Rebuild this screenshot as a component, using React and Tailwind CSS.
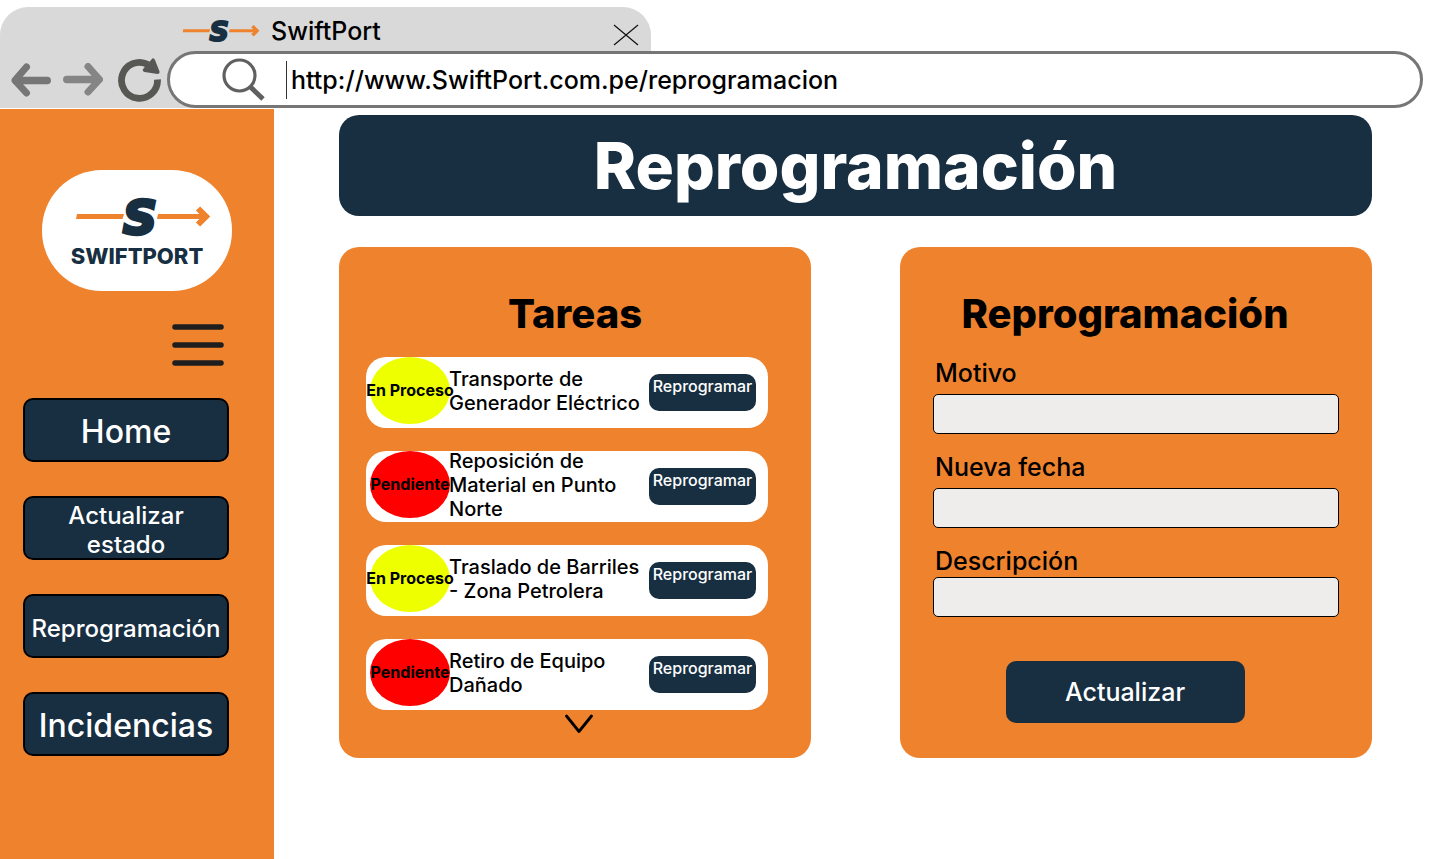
import { useId } from "react";

const NAV = [
  { label: "Home", size: "text-[32px] leading-10" },
  { label: "Actualizar estado", size: "text-2xl leading-[29px]" },
  { label: "Reprogramación", size: "text-2xl leading-[29px]" },
  { label: "Incidencias", size: "text-[32px] leading-10" },
];

const TASKS = [
  { status: "En Proceso", title: "Transporte de Generador Eléctrico" },
  { status: "Pendiente", title: "Reposición de Material en Punto Norte" },
  { status: "En Proceso", title: "Traslado de Barriles - Zona Petrolera" },
  { status: "Pendiente", title: "Retiro de Equipo Dañado" },
];

const STATUS_COLOR = {
  "En Proceso": "bg-[#eeff00]",
  Pendiente: "bg-[#ff0000]",
};

function LogoMark({ className }) {
  return (
    <svg viewBox="0 -14 134 70" className={className} aria-hidden="true">
      <path d="M1 18H48L46.500 23H0ZM82 18H127V23H81Z" fill="#ee822d" />
      <path d="M122 12.500L130 20.500L122 28.500" fill="none" stroke="#ee822d" strokeWidth="6" />
      <text
        x="64"
        y="38"
        textAnchor="middle"
        fontFamily="'DejaVu Sans', sans-serif"
        fontSize="47"
        fontWeight="700"
        fontStyle="italic"
        fill="#182f42"
        stroke="#182f42"
        strokeWidth="3.500"
      >
        S
      </text>
    </svg>
  );
}

function BrowserBar() {
  return (
    <header className="pt-[7px] pb-px">
      <div className="flex h-11 w-[651px] max-w-full items-center rounded-t-[28px] bg-[#d9d9d9] pt-1 pr-3 pl-[182px]">
        <LogoMark className="h-10 w-[78px] shrink-0" />
        <span className="flex-1 pl-[11px] text-[25px] leading-8 font-medium">SwiftPort</span>
        <button type="button" aria-label="Cerrar pestaña" className="pt-2">
          <svg width="26" height="22" viewBox="0 0 26 22" className="block" stroke="#111" strokeWidth="1.2">
            <path d="M1 1L25 21M25 1L1 21" />
          </svg>
        </button>
      </div>
      <div className="flex h-[57px] bg-[linear-gradient(#d9d9d9,#d9d9d9)] bg-[length:651px_100%] bg-no-repeat pr-[17px]">
        <div className="flex w-[167px] shrink-0 items-center gap-3 pl-[11px]">
          <button type="button" aria-label="Atrás">
            <svg width="40" height="34" viewBox="0 0 40 34" className="block" fill="none" stroke="#767676" strokeWidth="7.500">
              <path d="M5 17.500H36.200" strokeLinecap="round" />
              <path d="M15.500 4L4 17.300L15.500 30" strokeLinecap="round" strokeLinejoin="round" strokeWidth="7" />
            </svg>
          </button>
          <button type="button" aria-label="Adelante">
            <svg width="40" height="34" viewBox="0 0 40 34" className="block" fill="none" stroke="#858585" strokeWidth="7.500">
              <path d="M3.800 16.500H35" strokeLinecap="round" />
              <path d="M25 3.500L36.500 16.500L25 29" strokeLinecap="round" strokeLinejoin="round" strokeWidth="7" />
            </svg>
          </button>
          <button type="button" aria-label="Recargar" className="pl-[3px]">
            <svg width="44" height="44" viewBox="0 0 44 44" className="block" fill="none">
              <path d="M39.500 21.500A18 18 0 1 1 30 6.500" stroke="#575754" strokeWidth="6.800" />
              <path d="M33.500 1.500Q35.500 -1 37 2L41.500 13.500Q42 16 39.500 16L26.500 14Q23.500 13 25.500 10.500Z" fill="#575754" />
            </svg>
          </button>
        </div>
        <div className="flex min-w-0 flex-1 items-center rounded-full border-[3px] border-[#767676] bg-white pr-8 pl-[52px]">
          <svg width="43" height="43" viewBox="0 0 43 43" className="shrink-0" fill="none" stroke="#606060">
            <circle cx="17.500" cy="17.500" r="15.500" strokeWidth="3.200" />
            <path d="M28 28.500L41 41" strokeWidth="5" />
          </svg>
          <input
            aria-label="Dirección"
            defaultValue="http://www.SwiftPort.com.pe/reprogramacion"
            className="ml-[21px] h-[38px] min-w-0 flex-1 border-l border-[#333] pl-1 text-[25px] leading-8 font-medium outline-none"
          />
        </div>
      </div>
    </header>
  );
}

function Sidebar() {
  return (
    <aside className="flex w-[274px] shrink-0 flex-col bg-[#ee822d] pt-[61px] pb-8">
      <div className="ml-[42px] flex h-[121px] w-[190px] flex-col items-center rounded-[60px] bg-white pt-3">
        <LogoMark className="ml-3 h-[70px] w-[134px] shrink-0" />
        <span className="-mt-2 text-[22px] leading-6 font-extrabold text-[#182f42]">SWIFTPORT</span>
      </div>
      <button type="button" aria-label="Menú" className="mt-8 ml-[172px] w-[52px]">
        <svg width="52" height="43" viewBox="0 0 52 43" className="block" stroke="#1e1e1e" strokeWidth="5.500" strokeLinecap="round">
          <path d="M3 4H49M3 22H49M3 40H49" />
        </svg>
      </button>
      <nav className="mt-8 ml-[23px] flex w-[206px] flex-col gap-[34px]">
        {NAV.map((item) => (
          <a
            key={item.label}
            href="#"
            className={`flex h-16 items-center justify-center rounded-[10px] border-2 border-black bg-[#182f42] px-1 pt-1 text-center font-medium text-white ${item.size}`}
          >
            {item.label}
          </a>
        ))}
      </nav>
    </aside>
  );
}

function TaskRow({ status, title }) {
  return (
    <li className="flex h-[71px] items-center rounded-[20px] bg-white pr-3 pl-1">
      <span
        className={`flex h-[67px] w-20 shrink-0 items-center justify-center self-start rounded-[50%] pb-0.5 text-base font-bold whitespace-nowrap ${STATUS_COLOR[status]}`}
      >
        {status}
      </span>
      <p className="-ml-px min-w-0 flex-1 pb-1 text-xl leading-6 font-medium">{title}</p>
      <button
        type="button"
        className="flex h-[37px] w-[107px] shrink-0 items-start justify-center rounded-[10px] bg-[#182f42] pt-0.5 text-base leading-5 font-medium text-white"
      >
        Reprogramar
      </button>
    </li>
  );
}

function Field({ label, gap }) {
  const id = useId();
  return (
    <div className={`flex flex-col ${gap}`}>
      <label htmlFor={id} className="pl-0.5 text-[25px] leading-8 font-medium">
        {label}
      </label>
      <input id={id} className="h-10 w-full rounded-[5px] border border-black bg-[#efedeb] px-3 text-xl" />
    </div>
  );
}

export default function App() {
  return (
    <div className="flex min-h-screen flex-col bg-white font-[Inter,sans-serif] text-black">
      <BrowserBar />
      <div className="flex flex-1">
        <Sidebar />
        <main className="min-w-0 flex-1 pt-1.5 pr-[68px] pb-8 pl-[65px]">
          <h1 className="rounded-[20px] bg-[#182f42] py-2.5 text-center text-[64px] leading-[81px] font-extrabold text-white">
            Reprogramación
          </h1>
          <div className="mt-[31px] grid grid-cols-2 gap-[89px]">
            <section className="rounded-[20px] bg-[#ee822d] pt-[43px] pb-6">
              <h2 className="text-center text-[40px] leading-[48px] font-extrabold">Tareas</h2>
              <ul className="mt-[19px] flex flex-col gap-[23px] pr-[43px] pl-[27px]">
                {TASKS.map((task) => (
                  <TaskRow key={task.title} {...task} />
                ))}
              </ul>
              <button type="button" aria-label="Ver más tareas" className="mx-auto mt-1 block pl-2">
                <svg width="28" height="20" viewBox="0 0 28 20" className="block" fill="none" stroke="#000" strokeWidth="2.800" strokeLinecap="round" strokeLinejoin="round">
                  <path d="M1.500 2L14 17.500L26.500 2" />
                </svg>
              </button>
            </section>
            <section className="rounded-[20px] bg-[#ee822d] pt-[43px] pr-[33px] pb-[35px] pl-[33px]">
              <h2 className="pr-[22px] text-center text-[40px] leading-[48px] font-extrabold">Reprogramación</h2>
              <form className="mt-[19px] flex flex-col gap-[17px]" onSubmit={(e) => e.preventDefault()}>
                <Field label="Motivo" gap="gap-[5px]" />
                <Field label="Nueva fecha" gap="gap-[5px]" />
                <Field label="Descripción" gap="gap-0" />
                <div className="mt-[27px] flex justify-center pr-[22px]">
                  <button type="submit" className="h-[62px] w-[239px] rounded-[10px] bg-[#182f42] text-[25px] leading-8 font-medium text-white">
                    Actualizar
                  </button>
                </div>
              </form>
            </section>
          </div>
        </main>
      </div>
    </div>
  );
}
